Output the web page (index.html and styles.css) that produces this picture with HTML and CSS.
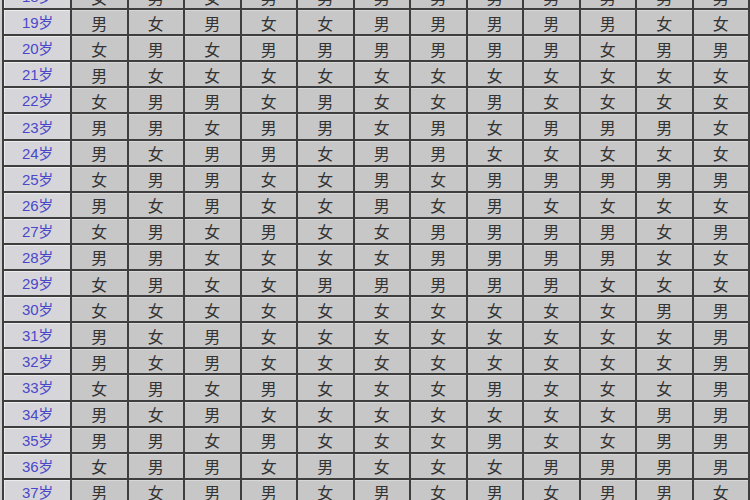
FILE: index.html
```html
<!DOCTYPE html>
<html lang="zh">
<head>
<meta charset="utf-8">
<title>清宫表</title>
<link rel="stylesheet" href="styles.css">
</head>
<body>
<div class="chart">
<div class="age">18岁</div><div class="c">女</div><div class="c">男</div><div class="c">女</div><div class="c">男</div><div class="c">男</div><div class="c">男</div><div class="c">男</div><div class="c">男</div><div class="c">男</div><div class="c">男</div><div class="c">男</div><div class="c">男</div>
<div class="age">19岁</div><div class="c">男</div><div class="c">女</div><div class="c">男</div><div class="c">女</div><div class="c">女</div><div class="c">男</div><div class="c">男</div><div class="c">男</div><div class="c">男</div><div class="c">男</div><div class="c">女</div><div class="c">女</div>
<div class="age">20岁</div><div class="c">女</div><div class="c">男</div><div class="c">女</div><div class="c">男</div><div class="c">男</div><div class="c">男</div><div class="c">男</div><div class="c">男</div><div class="c">男</div><div class="c">女</div><div class="c">男</div><div class="c">男</div>
<div class="age">21岁</div><div class="c">男</div><div class="c">女</div><div class="c">女</div><div class="c">女</div><div class="c">女</div><div class="c">女</div><div class="c">女</div><div class="c">女</div><div class="c">女</div><div class="c">女</div><div class="c">女</div><div class="c">女</div>
<div class="age">22岁</div><div class="c">女</div><div class="c">男</div><div class="c">男</div><div class="c">女</div><div class="c">男</div><div class="c">女</div><div class="c">女</div><div class="c">男</div><div class="c">女</div><div class="c">女</div><div class="c">女</div><div class="c">女</div>
<div class="age">23岁</div><div class="c">男</div><div class="c">男</div><div class="c">女</div><div class="c">男</div><div class="c">男</div><div class="c">女</div><div class="c">男</div><div class="c">女</div><div class="c">男</div><div class="c">男</div><div class="c">男</div><div class="c">女</div>
<div class="age">24岁</div><div class="c">男</div><div class="c">女</div><div class="c">男</div><div class="c">男</div><div class="c">女</div><div class="c">男</div><div class="c">男</div><div class="c">女</div><div class="c">女</div><div class="c">女</div><div class="c">女</div><div class="c">女</div>
<div class="age">25岁</div><div class="c">女</div><div class="c">男</div><div class="c">男</div><div class="c">女</div><div class="c">女</div><div class="c">男</div><div class="c">女</div><div class="c">男</div><div class="c">男</div><div class="c">男</div><div class="c">男</div><div class="c">男</div>
<div class="age">26岁</div><div class="c">男</div><div class="c">女</div><div class="c">男</div><div class="c">女</div><div class="c">女</div><div class="c">男</div><div class="c">女</div><div class="c">男</div><div class="c">女</div><div class="c">女</div><div class="c">女</div><div class="c">女</div>
<div class="age">27岁</div><div class="c">女</div><div class="c">男</div><div class="c">女</div><div class="c">男</div><div class="c">女</div><div class="c">女</div><div class="c">男</div><div class="c">男</div><div class="c">男</div><div class="c">男</div><div class="c">女</div><div class="c">男</div>
<div class="age">28岁</div><div class="c">男</div><div class="c">男</div><div class="c">女</div><div class="c">女</div><div class="c">女</div><div class="c">女</div><div class="c">男</div><div class="c">男</div><div class="c">男</div><div class="c">男</div><div class="c">女</div><div class="c">女</div>
<div class="age">29岁</div><div class="c">女</div><div class="c">男</div><div class="c">女</div><div class="c">女</div><div class="c">男</div><div class="c">男</div><div class="c">男</div><div class="c">男</div><div class="c">男</div><div class="c">女</div><div class="c">女</div><div class="c">女</div>
<div class="age">30岁</div><div class="c">女</div><div class="c">女</div><div class="c">女</div><div class="c">女</div><div class="c">女</div><div class="c">女</div><div class="c">女</div><div class="c">女</div><div class="c">女</div><div class="c">女</div><div class="c">男</div><div class="c">男</div>
<div class="age">31岁</div><div class="c">男</div><div class="c">女</div><div class="c">男</div><div class="c">女</div><div class="c">女</div><div class="c">女</div><div class="c">女</div><div class="c">女</div><div class="c">女</div><div class="c">女</div><div class="c">女</div><div class="c">男</div>
<div class="age">32岁</div><div class="c">男</div><div class="c">女</div><div class="c">男</div><div class="c">女</div><div class="c">女</div><div class="c">女</div><div class="c">女</div><div class="c">女</div><div class="c">女</div><div class="c">女</div><div class="c">女</div><div class="c">男</div>
<div class="age">33岁</div><div class="c">女</div><div class="c">男</div><div class="c">女</div><div class="c">男</div><div class="c">女</div><div class="c">女</div><div class="c">女</div><div class="c">男</div><div class="c">女</div><div class="c">女</div><div class="c">女</div><div class="c">男</div>
<div class="age">34岁</div><div class="c">男</div><div class="c">女</div><div class="c">男</div><div class="c">女</div><div class="c">女</div><div class="c">女</div><div class="c">女</div><div class="c">女</div><div class="c">女</div><div class="c">女</div><div class="c">男</div><div class="c">男</div>
<div class="age">35岁</div><div class="c">男</div><div class="c">男</div><div class="c">女</div><div class="c">男</div><div class="c">女</div><div class="c">女</div><div class="c">女</div><div class="c">男</div><div class="c">女</div><div class="c">女</div><div class="c">男</div><div class="c">男</div>
<div class="age">36岁</div><div class="c">女</div><div class="c">男</div><div class="c">男</div><div class="c">女</div><div class="c">男</div><div class="c">女</div><div class="c">女</div><div class="c">女</div><div class="c">男</div><div class="c">男</div><div class="c">男</div><div class="c">男</div>
<div class="age">37岁</div><div class="c">男</div><div class="c">女</div><div class="c">男</div><div class="c">男</div><div class="c">女</div><div class="c">男</div><div class="c">女</div><div class="c">男</div><div class="c">女</div><div class="c">男</div><div class="c">男</div><div class="c">女</div>
</div>
</body>
</html>
```
FILE: styles.css
```css
html, body {
  margin: 0;
  padding: 0;
  width: 750px;
  height: 500px;
  overflow: hidden;
  background: #cfcfcf;
}

.chart {
  margin: -18px 0 0 2px;
  width: 748px;
  box-sizing: border-box;
  display: grid;
  grid-template-columns: 66px repeat(12, 1fr);
  grid-auto-rows: 24.1px;
  gap: 2px;
  padding: 2px;
  background: #3e3e3e;
  font-family: "Noto Sans CJK SC", "Noto Sans", sans-serif;
}

.age,
.c {
  display: flex;
  align-items: center;
  justify-content: center;
  box-sizing: border-box;
  line-height: 1;
}

.age {
  background: #d6d6da;
  border-top: 1px solid #ececec;
  border-left: 1px solid #ececec;
  color: #4a48c8;
  font-family: "Liberation Sans", "Noto Sans CJK SC", sans-serif;
  font-size: 15px;
  letter-spacing: -0.3px;
}

.c {
  background: #c7c7c7;
  border-top: 1px solid #d8d8d8;
  color: #333333;
  font-size: 16px;
}
```
